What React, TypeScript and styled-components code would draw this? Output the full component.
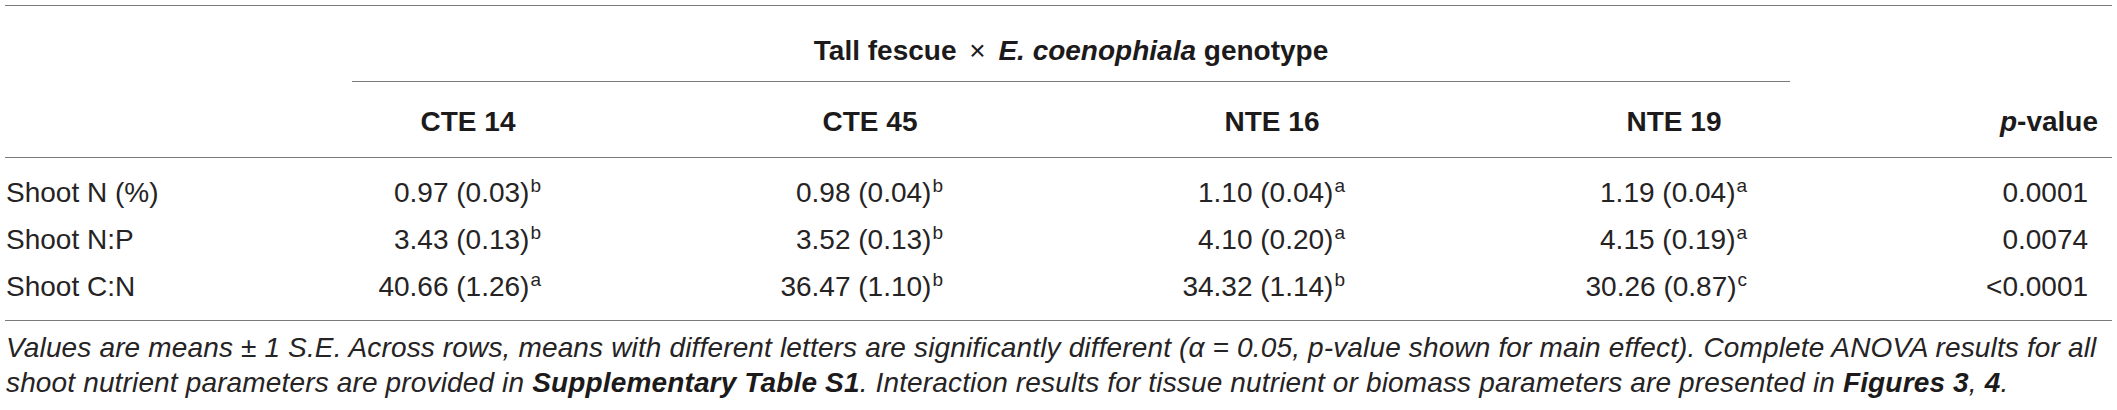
import React from "react";
import styled, { createGlobalStyle } from "styled-components";

type Cell = [string, string];
type Row = { label: string; values: Cell[]; p: string };

const genotypes = ["CTE 14", "CTE 45", "NTE 16", "NTE 19"];

const rows: Row[] = [
  {
    label: "Shoot N (%)",
    values: [
      ["0.97 (0.03)", "b"],
      ["0.98 (0.04)", "b"],
      ["1.10 (0.04)", "a"],
      ["1.19 (0.04)", "a"],
    ],
    p: "0.0001",
  },
  {
    label: "Shoot N:P",
    values: [
      ["3.43 (0.13)", "b"],
      ["3.52 (0.13)", "b"],
      ["4.10 (0.20)", "a"],
      ["4.15 (0.19)", "a"],
    ],
    p: "0.0074",
  },
  {
    label: "Shoot C:N",
    values: [
      ["40.66 (1.26)", "a"],
      ["36.47 (1.10)", "b"],
      ["34.32 (1.14)", "b"],
      ["30.26 (0.87)", "c"],
    ],
    p: "<0.0001",
  },
];

const GlobalStyle = createGlobalStyle`
  html, body {
    margin: 0;
    padding: 0;
    background: #fff;
  }
`;

const Page = styled.div`
  width: 2107px;
  padding: 5px 5px 0;
  color: #262324;
  font-family: "Liberation Sans", Arial, sans-serif;
  font-size: 28px;
  line-height: 34px;
`;

const Table = styled.table`
  width: 100%;
  table-layout: fixed;
  border-collapse: collapse;
  border-top: 1px solid #7a7a7a;
`;

const Col = styled.col<{ $w: number }>`
  width: ${(p) => p.$w}px;
`;

const EmptyTh = styled.th`
  padding: 0;
`;

const GroupTh = styled.th`
  padding: 28px 0 0;
  font-weight: bold;
  text-align: center;
  color: #1c1a1b;
`;

const GroupLabel = styled.div`
  margin: 0 85px;
  padding-bottom: 13px;
  border-bottom: 1px solid #7a7a7a;
`;

const Times = styled.span`
  margin: 0 5px;
  font-weight: normal;
`;

const HeadRow = styled.tr`
  border-bottom: 1px solid #7a7a7a;
`;

const HeadTh = styled.th<{ $align?: "center" | "right"; $pr?: number }>`
  padding: 23px ${(p) => p.$pr ?? 0}px 18px 0;
  font-weight: bold;
  color: #1c1a1b;
  text-align: ${(p) => p.$align ?? "center"};
`;

const Body = styled.tbody`
  border-bottom: 1px solid #7a7a7a;

  tr:first-child td {
    padding-top: 17.5px;
  }
  tr:last-child td {
    padding-bottom: 16.5px;
  }
`;

const Td = styled.td<{ $align?: "left" | "right"; $pr?: number }>`
  padding: 6.5px ${(p) => p.$pr ?? 0}px 6.5px ${(p) => (p.$align === "left" ? 1 : 0)}px;
  text-align: ${(p) => p.$align ?? "right"};
  white-space: nowrap;
`;

const Sup = styled.sup`
  margin-left: 1px;
  font-size: 19px;
  line-height: 0;
  vertical-align: 10px;
`;

const Caption = styled.p`
  margin: 9px 0 0;
  padding-left: 1px;
  font-style: italic;
  line-height: 35px;
  letter-spacing: 0.15px;

  strong {
    font-weight: bold;
    color: #1c1a1b;
  }
`;

const CaptionLine = styled.span`
  display: block;
  white-space: nowrap;
`;

export default function App() {
  return (
    <>
      <GlobalStyle />
      <Page>
        <Table>
          <colgroup>
            <Col $w={262} />
            <Col $w={402} />
            <Col $w={402} />
            <Col $w={402} />
            <Col $w={402} />
            <Col $w={237} />
          </colgroup>
          <thead>
            <tr>
              <EmptyTh />
              <GroupTh colSpan={4}>
                <GroupLabel>
                  Tall fescue<Times> × </Times>
                  <i>E. coenophiala</i> genotype
                </GroupLabel>
              </GroupTh>
              <EmptyTh />
            </tr>
            <HeadRow>
              <HeadTh />
              {genotypes.map((g) => (
                <HeadTh key={g}>{g}</HeadTh>
              ))}
              <HeadTh $align="right" $pr={14}>
                <i>p</i>-value
              </HeadTh>
            </HeadRow>
          </thead>
          <Body>
            {rows.map((r) => (
              <tr key={r.label}>
                <Td $align="left">{r.label}</Td>
                {r.values.map(([v, s], i) => (
                  <Td key={i} $pr={128}>
                    {v}
                    <Sup>{s}</Sup>
                  </Td>
                ))}
                <Td $pr={24}>{r.p}</Td>
              </tr>
            ))}
          </Body>
        </Table>
        <Caption>
          <CaptionLine>
            Values are means ± 1 S.E. Across rows, means with different letters are significantly
            different (α = 0.05, p-value shown for main effect). Complete ANOVA results for all
          </CaptionLine>
          <CaptionLine>
            shoot nutrient parameters are provided in <strong>Supplementary Table S1</strong>.
            Interaction results for tissue nutrient or biomass parameters are presented in{" "}
            <strong>Figures 3</strong>, <strong>4</strong>.
          </CaptionLine>
        </Caption>
      </Page>
    </>
  );
}
